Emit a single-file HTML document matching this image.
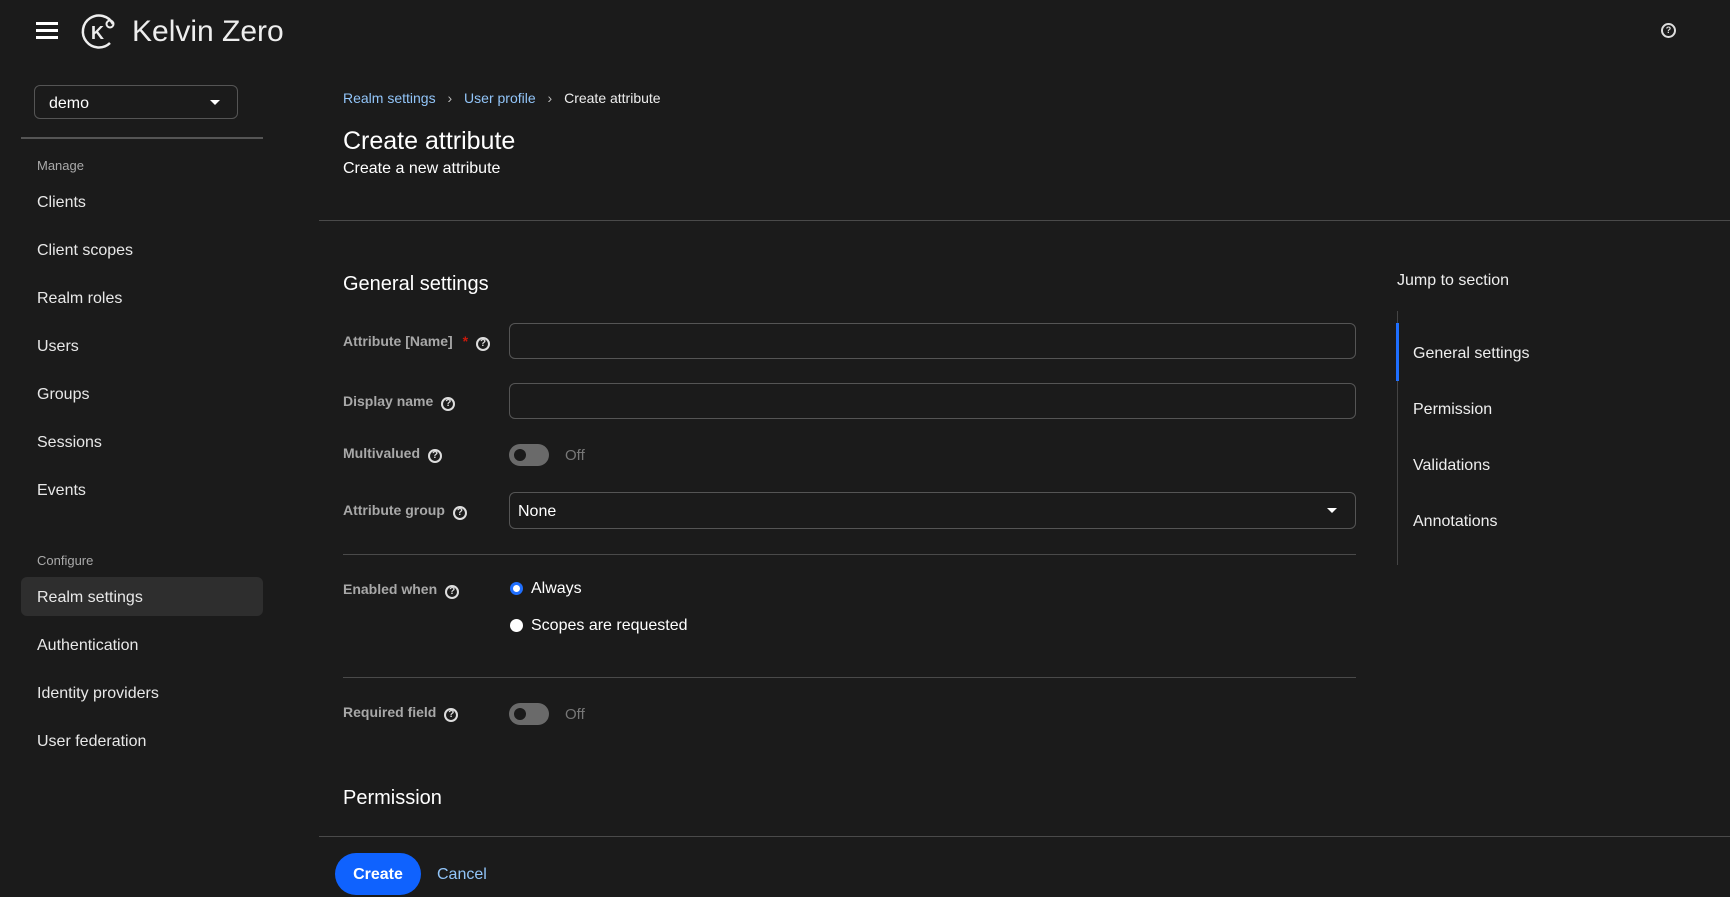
<!DOCTYPE html>
<html><head><meta charset="utf-8"><style>
*{box-sizing:border-box;margin:0;padding:0}
body{width:1730px;height:897px;overflow:hidden;background:#1b1b1b;color:#e0e0e0;font-family:"Liberation Sans",sans-serif;position:relative}
.a{position:absolute;white-space:nowrap}
.nav{font-size:16px;color:#e8e8e8;left:37px}
.lbl{font-size:14px;color:#a8a8a8;left:343px;font-weight:bold}
.q{display:inline-block;width:14px;height:14px;border:2px solid #ddd;border-radius:50%;font-size:10px;line-height:10px;text-align:center;color:#ddd;font-weight:bold;vertical-align:0px;margin-left:8px}
.inp{position:absolute;left:509px;width:847px;border:1px solid #555;border-radius:6px}
.tog{position:absolute;left:509px;width:40px;height:22px;border-radius:11px;background:#6a6a6a}
.tog:after{content:"";position:absolute;left:5px;top:5px;width:12px;height:12px;border-radius:50%;background:#1b1b1b}
.hr{position:absolute;height:1px;background:#4a4a4a}
.jn{font-size:16px;color:#eee;left:1413px}
</style></head><body>
<div class="a" style="left:36px;top:22px;width:22px">
<div style="height:3px;background:#fff;margin-bottom:4px"></div><div style="height:3px;background:#fff;margin-bottom:4px"></div><div style="height:3px;background:#fff"></div></div>
<svg class="a" style="left:80px;top:12px" width="40" height="40" viewBox="0 0 40 40"><path d="M30 31 A16 16 0 1 1 33 12" fill="none" stroke="#eee" stroke-width="2.5"/><text x="11" y="27" font-size="18" font-weight="bold" fill="#eee" font-family="Liberation Sans">K</text><circle cx="30" cy="12" r="3.5" fill="none" stroke="#eee" stroke-width="2"/></svg>
<div class="a" style="left:132px;top:15px;font-size:30px;color:#eee">Kelvin Zero</div>
<div class="a" style="left:1661px;top:23px;width:15px;height:15px;border:2px solid #ddd;border-radius:50%;font-size:9px;text-align:center;line-height:11px;font-weight:bold;color:#ddd">?</div>

<div class="a" style="left:34px;top:85px;width:204px;height:34px;border:1px solid #555;border-radius:6px"></div>
<div class="a" style="left:49px;top:95px;font-size:16px;color:#fff">demo</div>
<div class="a" style="left:210px;top:100px;border-left:5px solid transparent;border-right:5px solid transparent;border-top:5px solid #fff"></div>
<div class="hr" style="left:21px;top:137px;width:242px;height:2px;background:#555"></div>
<div class="a" style="left:37px;top:158px;font-size:13px;color:#aaa">Manage</div>
<div class="a nav" style="top:194px">Clients</div>
<div class="a nav" style="top:242px">Client scopes</div>
<div class="a nav" style="top:290px">Realm roles</div>
<div class="a nav" style="top:338px">Users</div>
<div class="a nav" style="top:386px">Groups</div>
<div class="a nav" style="top:434px">Sessions</div>
<div class="a nav" style="top:482px">Events</div>
<div class="a" style="left:37px;top:553px;font-size:13px;color:#aaa">Configure</div>
<div class="a" style="left:21px;top:577px;width:242px;height:39px;background:#2e2e2e;border-radius:6px"></div>
<div class="a nav" style="top:589px">Realm settings</div>
<div class="a nav" style="top:637px">Authentication</div>
<div class="a nav" style="top:685px">Identity providers</div>
<div class="a nav" style="top:733px">User federation</div>

<div class="a" style="left:343px;top:90px;font-size:14px;color:#92c5f9">Realm settings <span style="color:#bbb;margin:0 8px">›</span> User profile <span style="color:#bbb;margin:0 8px">›</span> <span style="color:#eee">Create attribute</span></div>
<div class="a" style="left:343px;top:127px;font-size:25px;color:#fff">Create attribute</div>
<div class="a" style="left:343px;top:160px;font-size:16px;color:#fff">Create a new attribute</div>
<div class="hr" style="left:319px;top:220px;width:1411px"></div>

<div class="a" style="left:343px;top:273px;font-size:20px;color:#fff">General settings</div>
<div class="a lbl" style="top:333px">Attribute [Name] <span style="color:#c9190b;margin-left:6px">*</span><span class="q">?</span></div>
<div class="inp" style="top:323px;height:36px"></div>
<div class="a lbl" style="top:393px">Display name<span class="q">?</span></div>
<div class="inp" style="top:383px;height:36px"></div>
<div class="a lbl" style="top:445px">Multivalued<span class="q">?</span></div>
<div class="tog" style="top:444px"></div>
<div class="a" style="left:565px;top:447px;font-size:15px;color:#777">Off</div>
<div class="a lbl" style="top:502px">Attribute group<span class="q">?</span></div>
<div class="inp" style="top:492px;height:37px"></div>
<div class="a" style="left:518px;top:503px;font-size:16px;color:#fff">None</div>
<div class="a" style="left:1327px;top:508px;border-left:5px solid transparent;border-right:5px solid transparent;border-top:5px solid #fff"></div>
<div class="hr" style="left:343px;top:554px;width:1013px"></div>
<div class="a lbl" style="top:581px">Enabled when<span class="q">?</span></div>
<div class="a" style="left:510px;top:582px;width:13px;height:13px;border-radius:50%;background:#fff;border:3px solid #1f6fff"></div>
<div class="a" style="left:531px;top:580px;font-size:16px;color:#fff">Always</div>
<div class="a" style="left:510px;top:619px;width:13px;height:13px;border-radius:50%;background:#fff"></div>
<div class="a" style="left:531px;top:617px;font-size:16px;color:#fff">Scopes are requested</div>
<div class="hr" style="left:343px;top:677px;width:1013px"></div>
<div class="a lbl" style="top:704px">Required field<span class="q">?</span></div>
<div class="tog" style="top:703px"></div>
<div class="a" style="left:565px;top:706px;font-size:15px;color:#777">Off</div>
<div class="a" style="left:343px;top:787px;font-size:20px;color:#fff">Permission</div>

<div class="a" style="left:1397px;top:272px;font-size:16px;color:#eee">Jump to section</div>
<div class="a" style="left:1397px;top:311px;width:1px;height:254px;background:#444"></div>
<div class="a" style="left:1396px;top:323px;width:3px;height:58px;background:#1f6fff"></div>
<div class="a jn" style="top:345px">General settings</div>
<div class="a jn" style="top:401px">Permission</div>
<div class="a jn" style="top:457px">Validations</div>
<div class="a jn" style="top:513px">Annotations</div>

<div class="hr" style="left:319px;top:836px;width:1411px"></div>
<div class="a" style="left:335px;top:853px;width:86px;height:42px;border-radius:21px;background:#0f62fe;color:#fff;font-size:16px;font-weight:bold;text-align:center;line-height:44px">Create</div>
<div class="a" style="left:437px;top:866px;font-size:16px;color:#92c5f9">Cancel</div>
</body></html>
